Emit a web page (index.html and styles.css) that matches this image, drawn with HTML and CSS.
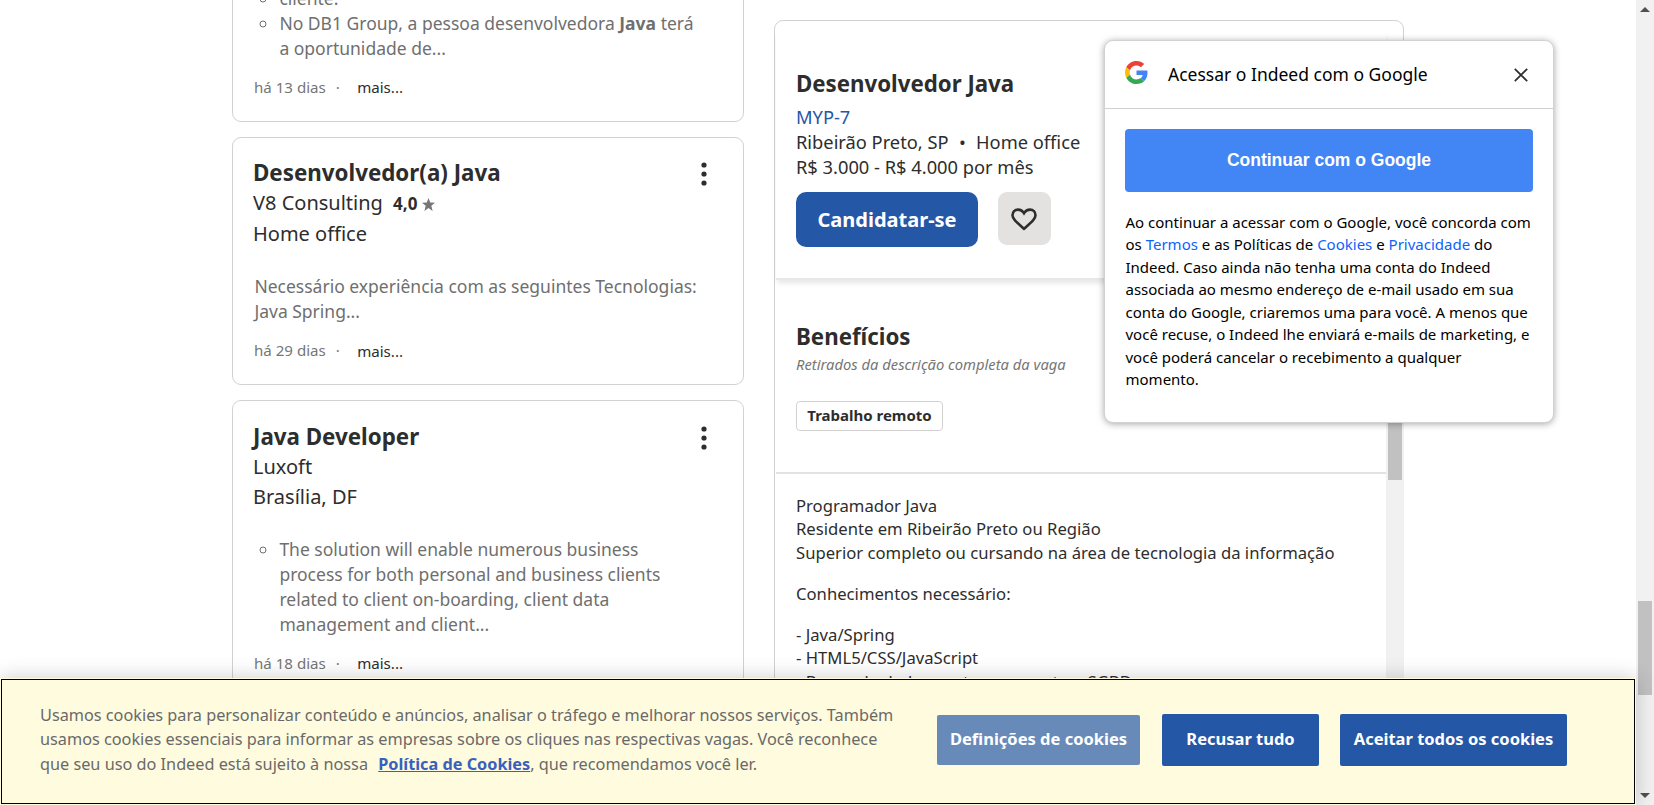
FILE: index.html
```
<!DOCTYPE html>
<html lang="pt-BR">
<head>
<meta charset="utf-8">
<title>Vagas Java | Indeed</title>
<link rel="stylesheet" href="styles.css">
</head>
<body>
<div class="page">
  <main class="content">
    <div class="results">
      <article class="card card-first">
        <ul class="snippet list"><li>cliente.</li><li>No DB1 Group, a pessoa desenvolvedora <b>Java</b> terá a oportunidade de...</li></ul>
        <div class="meta"><span class="age">há 13 dias</span><span class="dot">·</span><span class="more">mais...</span></div>
      </article>
      <article class="card">
        <div class="card-head"><h2 class="title">Desenvolvedor(a) Java</h2>
          <svg class="kebab" viewBox="0 0 8 24"><circle cx="4" cy="3" r="2.6"/><circle cx="4" cy="12" r="2.6"/><circle cx="4" cy="21" r="2.6"/></svg></div>
        <div class="company">V8 Consulting <span class="rating">4,0</span><svg class="star" viewBox="0 0 12 12"><path d="M6 0l1.600 4.200 4.400.2-3.400 2.800 1.200 4.800L6 9.300 2.200 12l1.200-4.800L0 4.400l4.400-.2z"/></svg></div>
        <div class="company">Home office</div>
        <p class="snippet">Necessário experiência com as seguintes Tecnologias: Java Spring...</p>
        <div class="meta"><span class="age">há 29 dias</span><span class="dot">·</span><span class="more more-low">mais...</span></div>
      </article>
      <article class="card">
        <div class="card-head"><h2 class="title">Java Developer</h2>
          <svg class="kebab" viewBox="0 0 8 24"><circle cx="4" cy="3" r="2.6"/><circle cx="4" cy="12" r="2.6"/><circle cx="4" cy="21" r="2.6"/></svg></div>
        <div class="company">Luxoft</div>
        <div class="company">Brasília, DF</div>
        <ul class="snippet list"><li>The solution will enable numerous business process for both personal and business clients related to client on-boarding, client data management and client...</li></ul>
        <div class="meta"><span class="age">há 18 dias</span><span class="dot">·</span><span class="more">mais...</span></div>
      </article>
    </div>
    <section class="detail">
      <header class="job-head">
        <h1 class="job-title">Desenvolvedor Java</h1>
        <a class="employer">MYP-7</a>
        <div class="job-line">Ribeirão Preto, SP<span class="bullet">•</span>Home office</div>
        <div class="job-line">R$ 3.000 - R$ 4.000 por mês</div>
        <div class="actions">
          <button class="apply">Candidatar-se</button>
          <button class="save" aria-label="Salvar"><svg class="heart" viewBox="0 0 26 23"><path d="M13 20.800C5 13.700 1.500 10.800 1.500 7.200 1.500 4 3.900 1.600 7 1.600c2.400 0 4.600 1.200 6 3.600 1.400-2.400 3.600-3.600 6-3.600 3.100 0 5.500 2.400 5.500 5.600 0 3.600-3.500 6.500-11.500 13.600z"/></svg></button>
        </div>
      </header>
      <div class="job-scroll">
        <div class="job-body">
          <div class="benefits">
            <h2 class="benefits-title">Benefícios</h2>
            <div class="benefits-note">Retirados da descrição completa da vaga</div>
            <span class="tag">Trabalho remoto</span>
          </div>
          <div class="description">
            <p>Programador Java<br>Residente em Ribeirão Preto ou Região<br>Superior completo ou cursando na área de tecnologia da informação</p>
            <p>Conhecimentos necessário:</p>
            <p>- Java/Spring<br>- HTML5/CSS/JavaScript<br>- Banco de dados postgres ou outros SGBD</p>
          </div>
        </div>
        <div class="inner-track"><div class="inner-thumb"></div></div>
      </div>
    </section>
  </main>
  <div class="scrollbar"><div class="arrow up"></div><div class="thumb"></div><div class="arrow down"></div></div>
</div>

<aside class="google">
  <div class="google-head">
    <svg class="g-logo" viewBox="0 0 48 48"><path fill="#EA4335" d="M24 9.500c3.540 0 6.710 1.220 9.210 3.600l6.850-6.850C35.900 2.380 30.470 0 24 0 14.620 0 6.510 5.380 2.560 13.220l7.980 6.190C12.430 13.720 17.740 9.500 24 9.500z"/><path fill="#4285F4" d="M46.980 24.550c0-1.570-.15-3.090-.38-4.550H24v9.020h12.940c-.58 2.960-2.260 5.480-4.780 7.180l7.730 6c4.510-4.180 7.090-10.360 7.090-17.650z"/><path fill="#FBBC05" d="M10.530 28.590c-.48-1.450-.76-2.990-.76-4.590s.27-3.140.76-4.590l-7.980-6.190C.92 16.460 0 20.120 0 24c0 3.880.92 7.540 2.560 10.780l7.970-6.190z"/><path fill="#34A853" d="M24 48c6.480 0 11.930-2.130 15.890-5.810l-7.730-6c-2.150 1.450-4.920 2.300-8.160 2.300-6.260 0-11.570-4.220-13.470-9.910l-7.980 6.190C6.510 42.620 14.620 48 24 48z"/></svg>
    <span class="google-title">Acessar o Indeed com o Google</span>
    <svg class="close" viewBox="0 0 14 14"><path d="M.8.8l12.400 12.400M13.200.8L.8 13.200"/></svg>
  </div>
  <div class="google-body">
    <button class="google-btn">Continuar com o Google</button>
    <p class="legal">Ao continuar a acessar com o Google, você concorda com os <a>Termos</a> e as Políticas de <a>Cookies</a> e <a>Privacidade</a> do Indeed. Caso ainda não tenha uma conta do Indeed associada ao mesmo endereço de e-mail usado em sua conta do Google, criaremos uma para você. A menos que você recuse, o Indeed lhe enviará e-mails de marketing, e você poderá cancelar o recebimento a qualquer momento.</p>
  </div>
</aside>

<div class="cookies">
  <p class="cookie-text">Usamos cookies para personalizar conteúdo e anúncios, analisar o tráfego e melhorar nossos serviços. Também<br>usamos cookies essenciais para informar as empresas sobre os cliques nas respectivas vagas. Você reconhece<br>que seu uso do Indeed está sujeito à nossa <a class="policy">Política de Cookies</a>, que recomendamos você ler.</p>
  <button class="cookie-btn settings">Definições de cookies</button>
  <button class="cookie-btn reject">Recusar tudo</button>
  <button class="cookie-btn accept">Aceitar todos os cookies</button>
</div>
</body>
</html>
```
FILE: styles.css
```
* { box-sizing: border-box; }
body { margin: 0; height: 805px; overflow: hidden; background: #fff; color: #2d2d2d; font-family: "Noto Sans", "Liberation Sans", sans-serif; }
h1, h2, p, ul { margin: 0; padding: 0; }
button { border: 0; padding: 0; font-family: inherit; font-weight: 700; color: #fff; white-space: nowrap; }

.page { display: flex; height: 805px; overflow: hidden; }
.content { flex: 1; display: flex; align-items: flex-start; gap: 30px; padding-left: 232px; overflow: hidden; height: 805px; }

/* result list */
.results { width: 512px; flex: none; display: flex; flex-direction: column; gap: 15px; margin-top: -80px; }
.card { border: 1px solid #d4d2d0; border-radius: 9px; padding: 19px 20px 0; height: 248px; flex: none; }
.card-first { height: 202px; padding-top: 65px; }
.card:last-child { height: 320px; padding-top: 20px; }
.card:last-child .snippet { margin-top: 24px; }
.card-head { display: flex; justify-content: space-between; height: 30.500px; }
.title { font-size: 22.350px; line-height: 32px; }
.kebab { width: 8px; height: 24px; margin: 5px 15px 0 0; fill: #2d2d2d; }
.company { font-size: 20px; line-height: 30px; height: 30.500px; white-space: nowrap; }
.company + .company { line-height: 31px; }
.card:last-child .company + .company { line-height: 29px; }
.rating { font-size: 17px; font-weight: 700; margin-left: 5px; }
.star { width: 13px; height: 13px; fill: #767676; margin-left: 5px; vertical-align: -1px; }
.snippet { font-size: 17.500px; line-height: 25px; color: #6f6f6f; margin: 25px 0 0 1.400px; }
.list { margin-left: 26.400px; width: 424px; list-style: circle; }
.card-first .snippet { margin-top: 0; }
.meta { display: flex; margin: 15px 0 0 1px; font-size: 15.100px; line-height: 22px; color: #767676; }
.dot { margin-left: 10px; }
.more { margin-left: 17.300px; color: #2d2d2d; }
.more-low { padding-top: 1px; }

/* job detail */
.detail { width: 630px; height: 805px; margin-top: 20px; border: 1px solid #d4d2d0; border-radius: 9px; flex: none; display: flex; flex-direction: column; }
.job-head { margin: 10px 17px 0 1px; padding: 35px 0 0 20px; height: 249px; flex: none; box-shadow: 0 4px 5px -1px rgba(0,0,0,.1); border-bottom: 2px solid #e8e8e8; }
.job-title { font-size: 22.250px; line-height: 35px; height: 38px; }
.employer { display: block; font-size: 18.300px; line-height: 25px; color: #2557a7; }
.job-line { font-size: 18.300px; line-height: 25px; }
.bullet { margin: 0 10.300px; }
.actions { display: flex; gap: 20px; margin-top: 13px; }
.apply { width: 182px; height: 55px; border-radius: 10px; background: #2557a7; font-size: 20px; }
.save { width: 53px; height: 53px; border-radius: 9px; background: #e4e2e0; display: flex; align-items: center; justify-content: center; padding: 1px 1px 0 0; }
.heart { width: 26px; height: 23px; fill: none; stroke: #2d2d2d; stroke-width: 2.600; }
.job-scroll { display: flex; flex: 1; min-height: 0; }
.job-body { flex: 1; margin-left: 1px; }
.benefits { height: 194px; padding: 40px 20px 0; border-bottom: 2px solid #e4e2e0; }
.benefits-title { font-size: 22.300px; line-height: 33px; }
.benefits-note { font-size: 14.750px; line-height: 22px; font-style: italic; color: #767676; }
.tag { display: inline-flex; align-items: center; justify-content: center; width: 147px; height: 30px; margin-top: 26px; padding-bottom: 2px; border: 1px solid #d4d2d0; border-radius: 4px; font-size: 15px; font-weight: 700; }
.description { padding: 19.700px 20px; font-size: 16.660px; line-height: 23.600px; white-space: nowrap; }
.description p { margin-bottom: 17.300px; }
.inner-track { width: 18px; margin-right: -1px; background: #f1f1f1; }
.inner-thumb { margin: 0 auto; width: 14px; height: 200px; background: #c1c1c1; }

/* page scrollbar */
.scrollbar { width: 18px; background: #f1f1f1; display: flex; flex-direction: column; align-items: center; }
.thumb { width: 14px; height: 94px; background: #c1c1c1; margin-top: 589px; }
.arrow { width: 0; height: 0; border: 5px solid transparent; }
.up { border-top: 0; border-bottom: 5px solid #505050; margin-top: 7px; }
.down { border-bottom: 0; border-top: 5px solid #505050; margin-top: 98px; }

/* sign-in dialog */
.google { position: absolute; left: 1104px; top: 40px; width: 450px; height: 383px; background: #fff; border: 1px solid #d4d2d0; border-radius: 9px; box-shadow: 0 1px 7px rgba(0,0,0,.35); color: #000; }
.google-head { display: flex; height: 68px; padding: 0 24.800px 0 20px; border-bottom: 1px solid #d4d2d0; }
.g-logo { width: 23px; height: 23px; margin-top: 20px; }
.google-title { flex: 1; margin-left: 20px; font-size: 17.500px; line-height: 67px; }
.close { width: 14px; height: 14px; margin-top: 27px; fill: none; stroke: #2d2d2d; stroke-width: 1.700; }
.google-body { padding: 20px; }
.google-btn { display: block; width: 408px; height: 63px; border-radius: 4px; background: #4285f4; font: 700 17.500px "Liberation Sans", Arial, sans-serif; }
.legal { margin: 18.600px -4px 0 .5px; font-size: 15px; line-height: 22.500px; }
.legal a { color: #0d62fe; }

/* cookie banner */
.cookies { position: absolute; left: 0; bottom: 0; width: 1636px; height: 127px; background: #fffbdf; outline: 1px solid #000; outline-offset: -2px; box-shadow: 0 0 20px rgba(0,0,0,.2); display: flex; align-items: center; padding-left: 40px; }
.cookie-text { width: 897px; font-size: 16.250px; line-height: 24.500px; color: #696969; white-space: nowrap; margin-top: -4px; }
.policy { color: #3860be; font-weight: 700; text-decoration: underline; margin-left: 6px; }
.cookie-btn { font-size: 16.500px; border-radius: 2px; background: #2557a7; height: 52px; margin-top: -3px; padding-bottom: 3px; }
.settings { width: 203px; height: 50px; background: #688ab9; }
.reject { width: 157px; margin-left: 22px; }
.accept { width: 227px; margin-left: 21px; }
```
